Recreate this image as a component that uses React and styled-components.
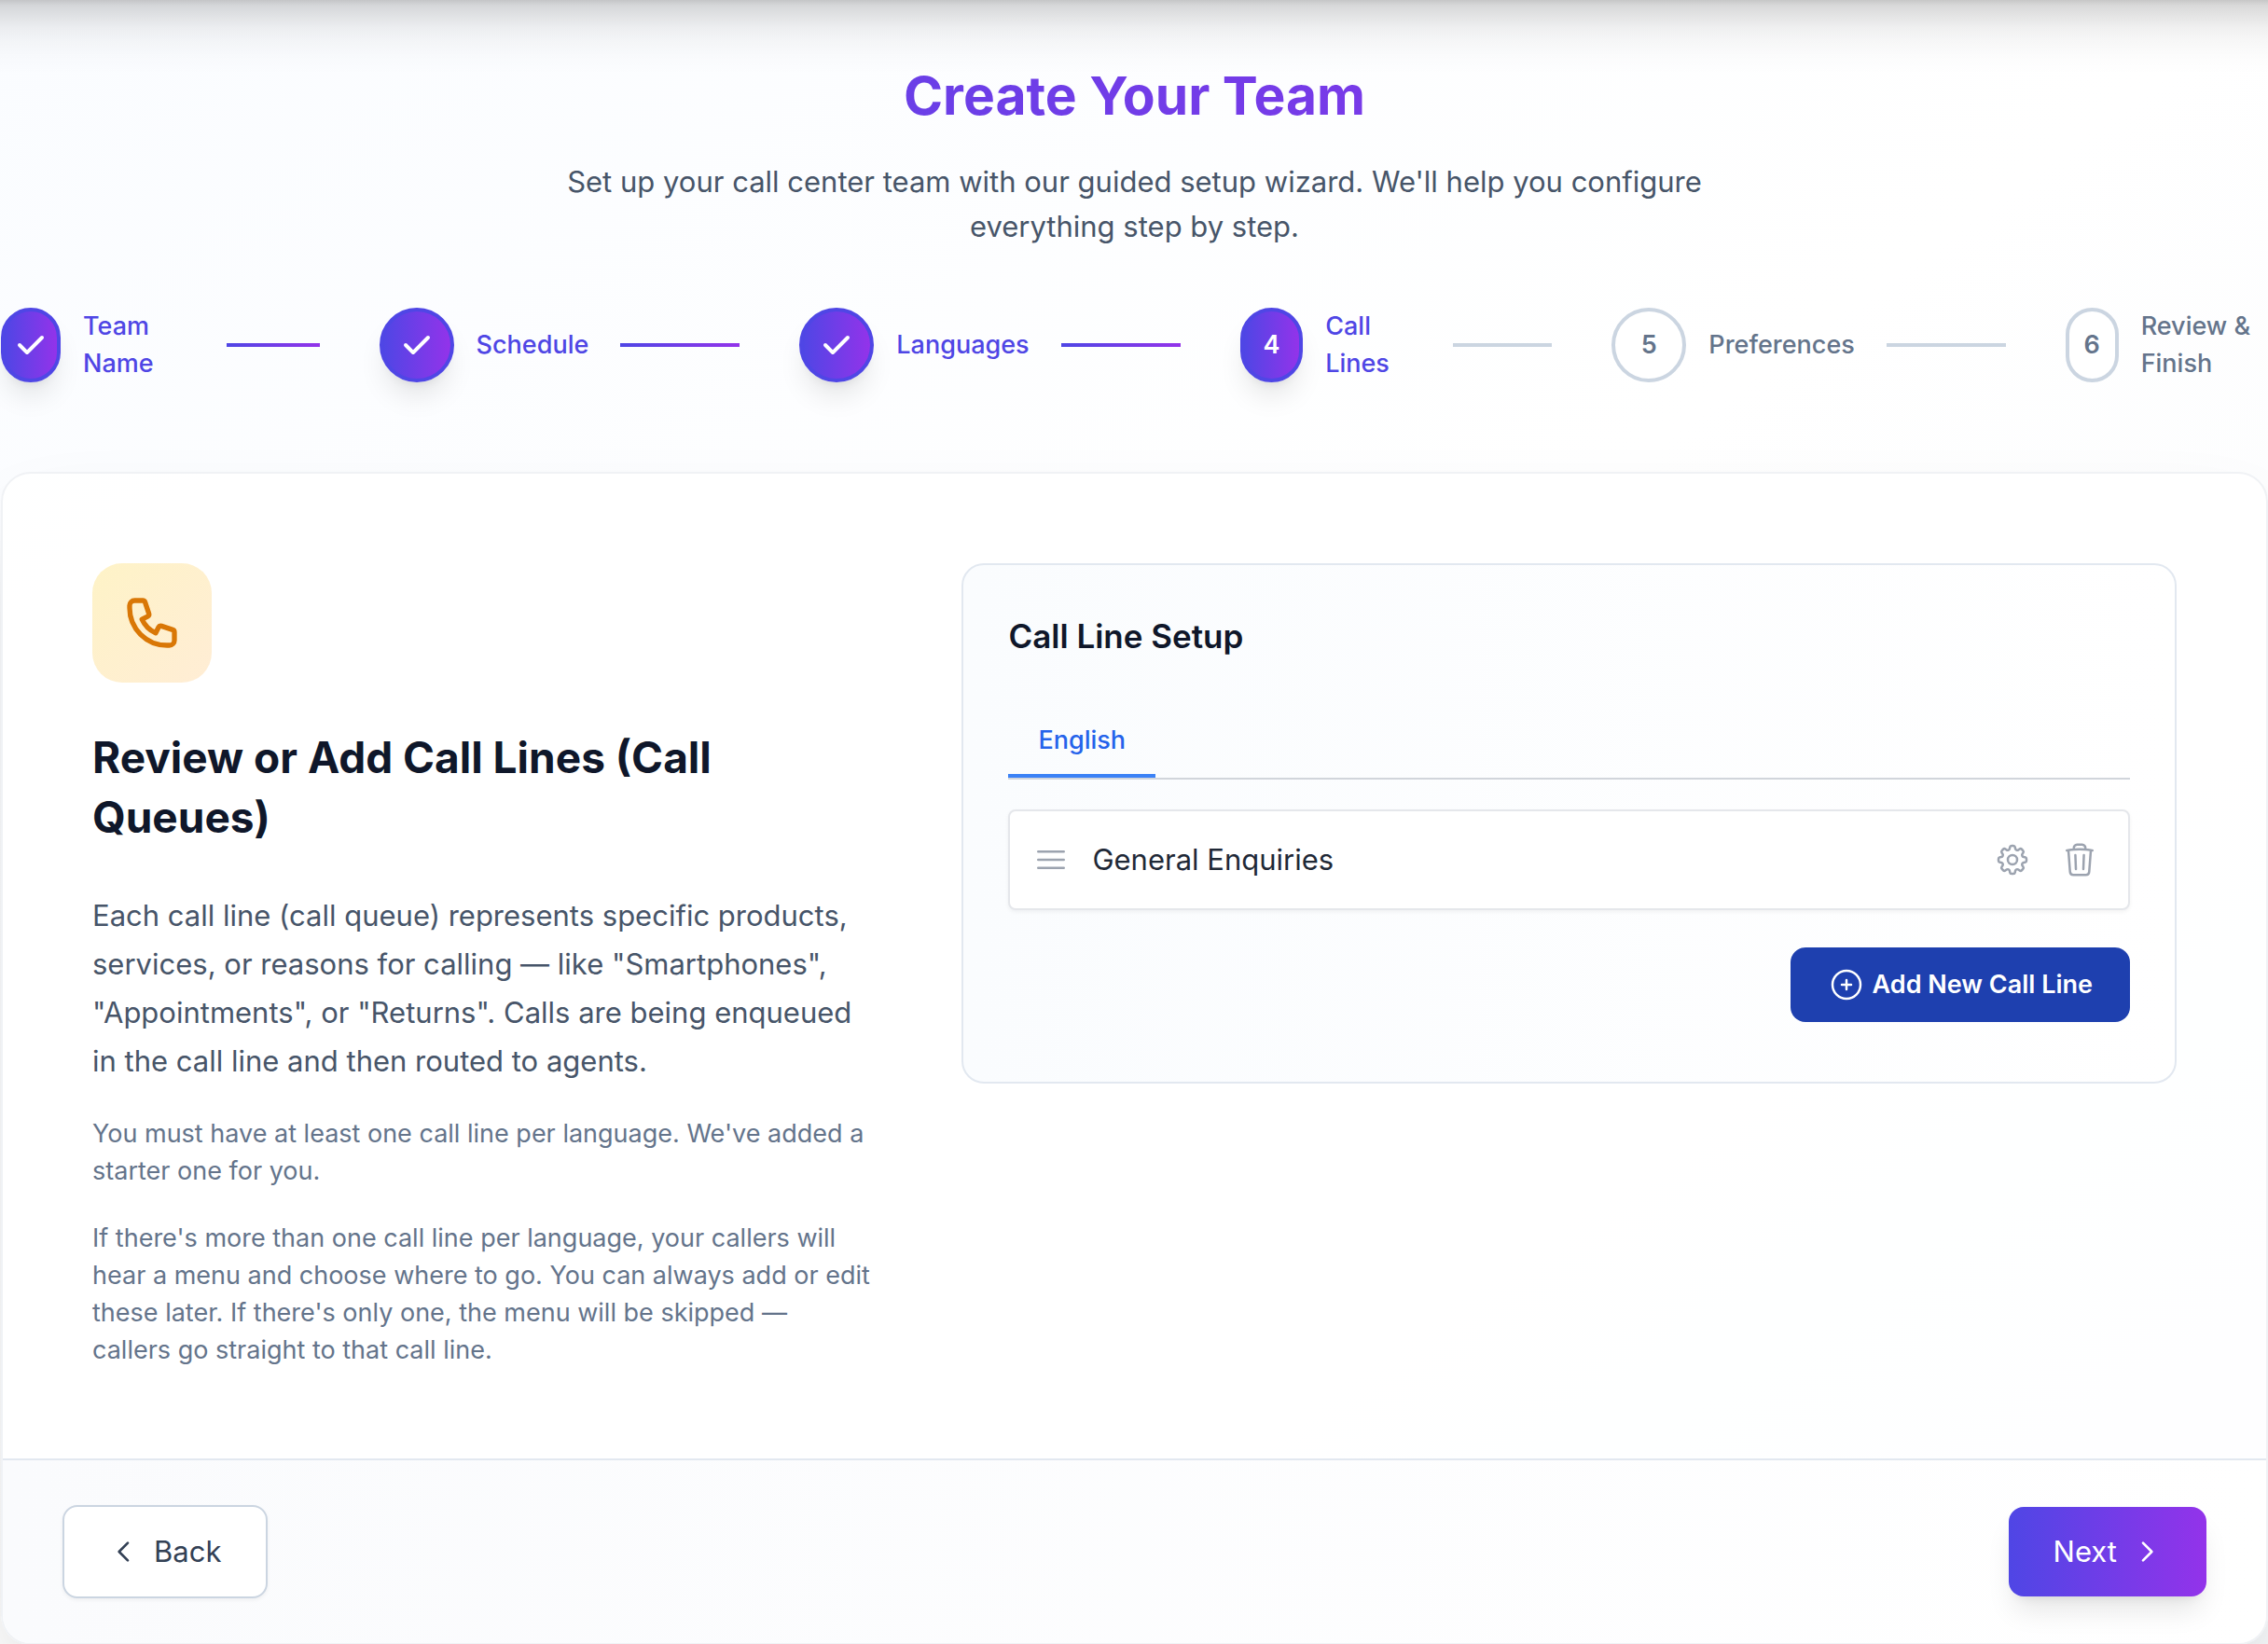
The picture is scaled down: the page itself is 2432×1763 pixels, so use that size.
import React from "react";
import styled, { createGlobalStyle, css } from "styled-components";
import { HiCheck, HiOutlineChevronLeft, HiOutlineChevronRight, HiOutlinePhone } from "react-icons/hi";
import { HiOutlineBars3, HiOutlineCog8Tooth, HiOutlinePlusCircle, HiOutlineTrash } from "react-icons/hi2";

const brand = "linear-gradient(to right, #4f46e5, #9333ea)";
const softShadow = "0 2px 4px rgba(0, 0, 0, 0.05)";
const liftShadow = "0 20px 30px -6px rgba(0, 0, 0, 0.1), 0 8px 12px -8px rgba(0, 0, 0, 0.1)";

const GlobalStyle = createGlobalStyle`
  *, *::before, *::after { box-sizing: border-box; }
  body {
    margin: 0;
    font-family: Inter, "Liberation Sans", sans-serif;
    font-size: 31px;
    line-height: 48px;
    color: #0f172a;
    -webkit-font-smoothing: antialiased;
  }
  h1, h2, h3, p, ol, ul { margin: 0; padding: 0; }
  ol, ul { list-style: none; }
  button { font: inherit; cursor: pointer; margin: 0; }
  svg { flex-shrink: 0; display: block; }
`;

const Page = styled.div`
  min-height: 100vh;
  padding-left: 1px;
  overflow: hidden;
  background:
    linear-gradient(
      to bottom,
      rgba(0, 0, 0, 0.22) 0,
      rgba(0, 0, 0, 0.15) 6px,
      rgba(0, 0, 0, 0.1) 18px,
      rgba(0, 0, 0, 0.06) 30px,
      rgba(0, 0, 0, 0.03) 44px,
      rgba(0, 0, 0, 0.01) 60px,
      rgba(0, 0, 0, 0) 80px
    ),
    linear-gradient(to bottom right, #fafcff, #ffffff 50%, #f8fafc);
`;

const Header = styled.header`
  display: flex;
  flex-direction: column;
  align-items: center;
  gap: 32px;
  padding: 67px 0 63px;
  text-align: center;
`;

const Title = styled.h1`
  width: 100%;
  font-size: 57px;
  line-height: 72px;
  font-weight: 700;
  color: transparent;
  background: ${brand};
  background-clip: text;
  -webkit-background-clip: text;
`;

const Subtitle = styled.p`
  max-width: 1344px;
  color: #475569;
`;

const Steps = styled.ol`
  display: flex;
  align-items: center;
  justify-content: space-between;
  gap: 64px;
  margin-bottom: 96px;
`;

const Step = styled.li`
  display: flex;
  align-items: center;
  font-size: 27px;
  line-height: 40px;
  color: ${(p) => (p.$reached ? "#4f46e5" : "#64748b")};
`;

const StepMarker = styled.span`
  display: flex;
  align-items: center;
  justify-content: center;
  width: 80px;
  height: 80px;
  border: 4px solid #cbd5e1;
  border-radius: 40px;
  background: #ffffff;
  font-weight: 600;

  ${(p) =>
    p.$reached &&
    css`
      border-color: #4f46e5;
      background: ${brand};
      color: #ffffff;
      box-shadow: ${liftShadow};
    `}
`;

const StepLabel = styled.span`
  margin-left: 24px;
  font-weight: 500;
`;

const StepLine = styled.span`
  width: 128px;
  height: 4px;
  margin-left: 34px;
  background: ${(p) => (p.$done ? brand : "#cbd5e1")};
`;

const Card = styled.main`
  border: 2px solid #f0f2f5;
  border-radius: 32px;
  background: rgba(255, 255, 255, 0.8);
  box-shadow: 0 50px 100px -24px rgba(0, 0, 0, 0.2);
  overflow: hidden;
`;

const Content = styled.div`
  display: grid;
  grid-template-columns: repeat(5, minmax(0, 1fr));
  align-items: start;
  gap: 96px;
  padding: 96px;
`;

const Intro = styled.section`
  grid-column: span 2;
`;

const IntroIcon = styled.div`
  display: flex;
  align-items: center;
  justify-content: center;
  width: 128px;
  height: 128px;
  margin-bottom: 48px;
  border-radius: 32px;
  background: linear-gradient(to bottom right, #fef3c7, #ffedd5);
  color: #d97706;
`;

const IntroTitle = styled.h2`
  margin-bottom: 48px;
  font-size: 46px;
  line-height: 64px;
  font-weight: 700;
`;

const Lead = styled.p`
  line-height: 52px;
  color: #475569;
`;

const Note = styled.p`
  margin-top: 32px;
  font-size: 27px;
  line-height: 40px;
  color: #64748b;
`;

const Setup = styled.section`
  grid-column: span 3;
  padding: 48px;
  border: 2px solid #e2e8f0;
  border-radius: 24px;
  background: linear-gradient(to right, #fafcfe, #ffffff);
`;

const SetupTitle = styled.h3`
  margin-bottom: 48px;
  font-size: 35px;
  line-height: 56px;
  font-weight: 600;
`;

const Tabs = styled.div`
  display: flex;
  margin-bottom: 32px;
  border-bottom: 2px solid #d1d5db;
`;

const Tab = styled.button`
  padding: 16px 32px;
  border: 0;
  border-bottom: 4px solid #3b82f6;
  background: none;
  font-size: 27px;
  line-height: 40px;
  font-weight: 500;
  color: #2563eb;
`;

const Line = styled.li`
  display: flex;
  align-items: center;
  gap: 24px;
  padding: 24px;
  border: 2px solid #e5e7eb;
  border-radius: 8px;
  background: #ffffff;
  box-shadow: ${softShadow};
  color: #9ca3af;
`;

const LineName = styled.span`
  flex: 1;
  color: #1f2937;
`;

const LineActions = styled.div`
  display: flex;
  gap: 16px;
`;

const IconButton = styled.button`
  padding: 8px;
  border: 0;
  background: none;
  color: #9ca3af;
`;

const SetupActions = styled.div`
  display: flex;
  justify-content: flex-end;
  padding: 40px 0 16px;
`;

const AddButton = styled.button`
  display: flex;
  align-items: center;
  gap: 8px;
  padding: 20px 40px;
  border: 0;
  border-radius: 16px;
  background: #1e40af;
  font-size: 27px;
  line-height: 40px;
  font-weight: 600;
  color: #ffffff;
`;

const Footer = styled.footer`
  display: flex;
  align-items: center;
  justify-content: space-between;
  padding: 48px 64px;
  border-top: 2px solid #e2e8f0;
  background: linear-gradient(to right, #fafbfd, #ffffff);
`;

const NavButton = styled.button`
  display: flex;
  align-items: center;
  gap: 16px;
  padding: 24px 48px;
  border: ${(p) => (p.$primary ? "0" : "2px solid #cbd5e1")};
  border-radius: 16px;
  background: ${(p) => (p.$primary ? brand : "#ffffff")};
  box-shadow: ${(p) => (p.$primary ? liftShadow : softShadow)};
  color: ${(p) => (p.$primary ? "#ffffff" : "#334155")};
`;

const steps = ["Team Name", "Schedule", "Languages", "Call Lines", "Preferences", "Review & Finish"];
const current = 3;

export default function App() {
  return (
    <Page>
      <GlobalStyle />
      <Header>
        <Title>Create Your Team</Title>
        <Subtitle>
          Set up your call center team with our guided setup wizard. We'll help you configure everything step by step.
        </Subtitle>
      </Header>

      <Steps>
        {steps.map((name, i) => (
          <Step key={name} $reached={i <= current} aria-current={i === current ? "step" : undefined}>
            <StepMarker $reached={i <= current}>{i < current ? <HiCheck size={40} /> : i + 1}</StepMarker>
            <StepLabel>{name}</StepLabel>
            {i < steps.length - 1 && <StepLine $done={i < current} />}
          </Step>
        ))}
      </Steps>

      <Card>
        <Content>
          <Intro>
            <IntroIcon>
              <HiOutlinePhone size={64} />
            </IntroIcon>
            <IntroTitle>Review or Add Call Lines (Call Queues)</IntroTitle>
            <Lead>
              Each call line (call queue) represents specific products, services, or reasons for calling — like
              "Smartphones", "Appointments", or "Returns". Calls are being enqueued in the call line and then routed to
              agents.
            </Lead>
            <Note>You must have at least one call line per language. We've added a starter one for you.</Note>
            <Note>
              If there's more than one call line per language, your callers will hear a menu and choose where to go. You
              can always add or edit these later. If there's only one, the menu will be skipped — callers&nbsp;go
              straight to that call line.
            </Note>
          </Intro>

          <Setup>
            <SetupTitle>Call Line Setup</SetupTitle>
            <Tabs role="tablist">
              <Tab type="button" role="tab" aria-selected="true">
                English
              </Tab>
            </Tabs>
            <ul>
              <Line>
                <HiOutlineBars3 size={40} />
                <LineName>General Enquiries</LineName>
                <LineActions>
                  <IconButton type="button" aria-label="Settings">
                    <HiOutlineCog8Tooth size={40} />
                  </IconButton>
                  <IconButton type="button" aria-label="Delete">
                    <HiOutlineTrash size={40} />
                  </IconButton>
                </LineActions>
              </Line>
            </ul>
            <SetupActions>
              <AddButton type="button">
                <HiOutlinePlusCircle size={40} />
                Add New Call Line
              </AddButton>
            </SetupActions>
          </Setup>
        </Content>

        <Footer>
          <NavButton type="button">
            <HiOutlineChevronLeft size={32} />
            Back
          </NavButton>
          <NavButton type="button" $primary>
            Next
            <HiOutlineChevronRight size={32} />
          </NavButton>
        </Footer>
      </Card>
    </Page>
  );
}
